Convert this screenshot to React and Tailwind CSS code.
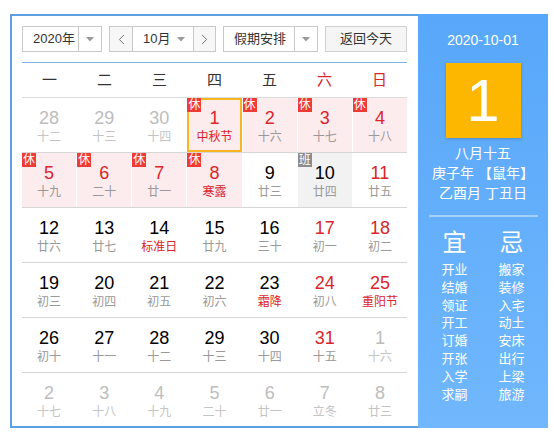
import React from 'react';
import { ChevronLeft, ChevronRight } from 'lucide-react';

const FONT = { fontFamily: '"Liberation Sans", "Noto Sans CJK SC", sans-serif' };

// n: day, l: lunar, g: other month, r: red number, lr: red lunar, rest: 休, work: 班, sel: selected
const rows = [
  [
    { n: 28, l: '十二', g: true }, { n: 29, l: '十三', g: true }, { n: 30, l: '十四', g: true },
    { n: 1, l: '中秋节', rest: true, lr: true, sel: true }, { n: 2, l: '十六', rest: true },
    { n: 3, l: '十七', rest: true }, { n: 4, l: '十八', rest: true },
  ],
  [
    { n: 5, l: '十九', rest: true }, { n: 6, l: '二十', rest: true }, { n: 7, l: '廿一', rest: true },
    { n: 8, l: '寒露', rest: true, lr: true }, { n: 9, l: '廿三' }, { n: 10, l: '廿四', work: true },
    { n: 11, l: '廿五', r: true },
  ],
  [
    { n: 12, l: '廿六' }, { n: 13, l: '廿七' }, { n: 14, l: '标准日', lr: true }, { n: 15, l: '廿九' },
    { n: 16, l: '三十' }, { n: 17, l: '初一', r: true }, { n: 18, l: '初二', r: true },
  ],
  [
    { n: 19, l: '初三' }, { n: 20, l: '初四' }, { n: 21, l: '初五' }, { n: 22, l: '初六' },
    { n: 23, l: '霜降', lr: true }, { n: 24, l: '初八', r: true }, { n: 25, l: '重阳节', r: true, lr: true },
  ],
  [
    { n: 26, l: '初十' }, { n: 27, l: '十一' }, { n: 28, l: '十二' }, { n: 29, l: '十三' },
    { n: 30, l: '十四' }, { n: 31, l: '十五', r: true }, { n: 1, l: '十六', g: true },
  ],
  [
    { n: 2, l: '十七', g: true }, { n: 3, l: '十八', g: true }, { n: 4, l: '十九', g: true },
    { n: 5, l: '二十', g: true }, { n: 6, l: '廿一', g: true }, { n: 7, l: '立冬', g: true },
    { n: 8, l: '廿三', g: true },
  ],
];

const yi = ['开业', '结婚', '领证', '开工', '订婚', '开张', '入学', '求嗣'];
const ji = ['搬家', '装修', '入宅', '动土', '安床', '出行', '上梁', '旅游'];

const Caret = () => (
  <svg width="8" height="5" viewBox="0 0 8 5">
    <path d="M0 0 L8 0 L4 4.5 Z" fill="#9a9a9a" />
  </svg>
);

const Cell = ({ d }) => {
  let bg = '';
  if (d.rest) bg = 'bg-[#fdeced]';
  if (d.work) bg = 'bg-[#f2f2f2]';
  const numColor = d.g ? 'text-[#bdbdbd]' : d.rest || d.r ? 'text-[#d9252b]' : 'text-[#000]';
  const lunColor = d.g ? 'text-[#c4c4c4]' : d.lr ? 'text-[#d9252b]' : 'text-[#999]';
  return (
    <div className={`relative h-full flex flex-col items-center pt-[9px] ${bg}`}>
      {d.sel && <div className="absolute inset-0 border-2 border-[#f7b521]" />}
      {d.rest && (
        <span className="absolute top-0 left-0 z-10 w-[14px] h-[14px] bg-[#ef3b36] text-white text-[12px] leading-[14px] text-center">休</span>
      )}
      {d.work && (
        <span className="absolute top-0 left-0 z-10 w-[14px] h-[14px] bg-[#8c8c8c] text-white text-[12px] leading-[14px] text-center">班</span>
      )}
      <span className={`text-[18px] leading-[22px] ${numColor}`}>{d.n}</span>
      <span className={`text-[12px] leading-[16px] ${lunColor}`}>{d.l}</span>
    </div>
  );
};

const App = () => {
  return (
    <div className="w-[554px] h-[434px] bg-white pt-[14px] pl-[10px]" style={FONT}>
      <div className="flex w-[538px] h-[414px]">
        {/* Calendar */}
        <div className="w-[408px] h-full border-l-2 border-t-2 border-b-2 border-[#5c9fe2] pl-[10px] pr-[11px] pt-[10px] overflow-hidden">
          {/* Toolbar */}
          <div className="flex items-center gap-[7px] h-[26px] text-[13px] text-[#333]">
            <div className="flex h-full w-[80px] border border-[#c9c9c9] bg-white">
              <div className="w-[55px] flex items-center pl-[10px]">2020年</div>
              <div className="flex-1 flex items-center justify-center border-l border-[#c9c9c9]"><Caret /></div>
            </div>
            <div className="flex h-full w-[107px] border border-[#c9c9c9]">
              <div className="w-[23px] flex items-center justify-center bg-[#f7f7f7] border-r border-[#c9c9c9]">
                <ChevronLeft size={17} strokeWidth={1.3} color="#666" />
              </div>
              <div className="flex-1 flex items-center justify-between pl-[10px] pr-[8px] bg-white">
                <span>10月</span>
                <Caret />
              </div>
              <div className="w-[22px] flex items-center justify-center bg-[#f7f7f7] border-l border-[#c9c9c9]">
                <ChevronRight size={17} strokeWidth={1.3} color="#666" />
              </div>
            </div>
            <div className="flex h-full w-[95px] border border-[#c9c9c9] bg-white">
              <div className="w-[70px] flex items-center pl-[10px]">假期安排</div>
              <div className="flex-1 flex items-center justify-center border-l border-[#c9c9c9]"><Caret /></div>
            </div>
            <div className="flex-1 h-full flex items-center justify-center border border-[#d0d0d0] bg-[#f5f5f5]">
              返回今天
            </div>
          </div>

          <div className="mt-[10px] h-px bg-[#7eb3e8]" />

          {/* Weekday header */}
          <div className="grid grid-cols-7 h-[35px] border-b border-[#dcdcdc] text-[15px]">
            {['一', '二', '三', '四', '五', '六', '日'].map((w, i) => (
              <div key={w} className={`flex items-center justify-center ${i >= 5 ? 'text-[#d9252b]' : 'text-[#333]'}`}>
                {w}
              </div>
            ))}
          </div>

          {/* Days */}
          {rows.map((row, ri) => (
            <div key={ri} className={`grid grid-cols-7 gap-x-px h-[55px] ${ri < 5 ? 'border-b border-[#d6d6d6]' : ''}`}>
              {row.map((d, ci) => (
                <Cell key={ci} d={d} />
              ))}
            </div>
          ))}
        </div>

        {/* Right panel */}
        <div className="w-[130px] h-full bg-gradient-to-b from-[#58a7fa] to-[#70b7fd] flex flex-col items-center text-white">
          <div className="mt-[16px] text-[14px] leading-5">2020-10-01</div>
          <div className="mt-[13px] w-[75px] h-[75px] bg-[#fdb700] flex items-center justify-center text-[60px] leading-none shadow-[0_1px_3px_rgba(0,0,0,0.2)]">
            1
          </div>
          <div className="mt-[5px] text-[14px] leading-5">八月十五</div>
          <div className="text-[14px] leading-5">庚子年 【鼠年】</div>
          <div className="text-[14px] leading-5">乙酉月 丁丑日</div>
          <div className="mt-[12px] w-[109px] h-[2px] bg-[#a6cffb]" />
          <div className="mt-[12px] flex gap-[17px]">
            <div className="w-[40px] flex flex-col items-center">
              <div className="text-[24px] leading-[28px]">宜</div>
              <div className="mt-[4px] flex flex-col items-center text-[13px] leading-[17.8px]">
                {yi.map((t) => <span key={t}>{t}</span>)}
              </div>
            </div>
            <div className="w-[40px] flex flex-col items-center">
              <div className="text-[24px] leading-[28px]">忌</div>
              <div className="mt-[4px] flex flex-col items-center text-[13px] leading-[17.8px]">
                {ji.map((t) => <span key={t}>{t}</span>)}
              </div>
            </div>
          </div>
        </div>
      </div>
    </div>
  );
};

export default App;
